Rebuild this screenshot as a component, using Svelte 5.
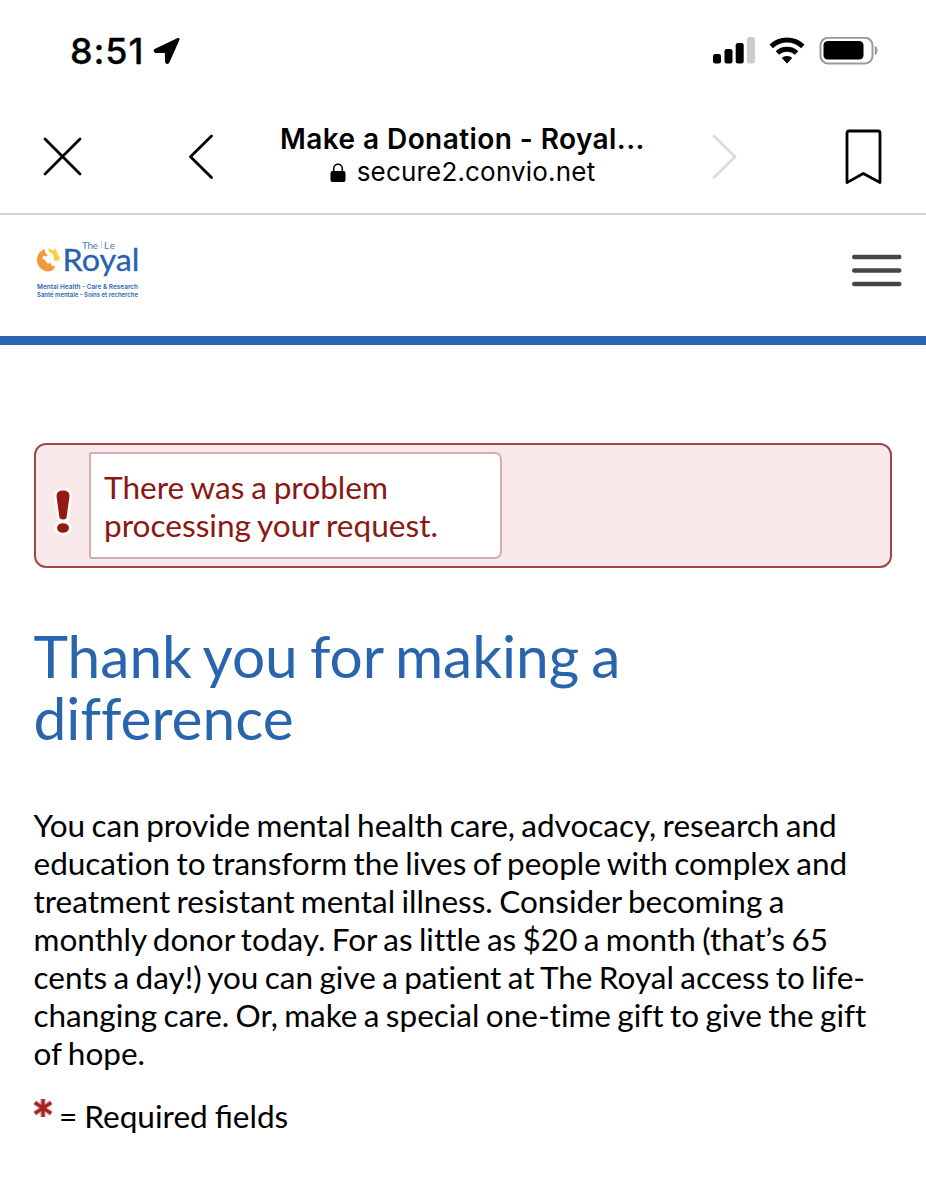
<script lang="ts">
  const title = 'Make a Donation - Royal...';
  const host = 'secure2.convio.net';

  const intro = [
    'You can provide mental health care, advocacy, research and',
    'education to transform the lives of people with complex and',
    'treatment resistant mental illness. Consider becoming a',
    'monthly donor today. For as little as $20 a month (that’s 65',
    'cents a day!) you can give a patient at The Royal access to life-',
    'changing care. Or, make a special one-time gift to give the gift',
    'of hope.'
  ];
</script>

<div class="screen">
  <div class="status-bar">
    <div class="time">
      <span>8:51</span>
      <svg width="30" height="30" viewBox="0 0 30 30">
        <path d="M26.3 3.2 L3.2 14.2 Q2.6 15.4 4 15.6 L14 15.8 L14.4 26 Q15.2 27.4 16.2 26 Z" fill="#000" stroke="#000" stroke-width="2.6" stroke-linejoin="round" />
      </svg>
    </div>
    <div class="indicators">
      <svg width="42" height="28" viewBox="0 0 42 28">
        <rect x="0" y="17" width="8" height="9.5" rx="2.3" />
        <rect x="11.5" y="12" width="8" height="14.5" rx="2.3" />
        <rect x="22.7" y="6" width="8" height="20.5" rx="2.3" />
        <rect x="34" y="0" width="8" height="26.5" rx="2.3" fill="#ccc" />
      </svg>
      <svg class="wifi" width="36" height="28" viewBox="0 0 36 28">
        <path d="M2.2 9.4 A23 23 0 0 1 33.8 9.4" />
        <path d="M8.4 16 A14 14 0 0 1 27.6 16" />
        <path d="M18 19 C15.8 19 14 19.8 12.8 21.1 L18 26.5 L23.2 21.1 C22 19.8 20.2 19 18 19 Z" class="dot" />
      </svg>
      <svg width="60" height="28" viewBox="0 0 60 28">
        <rect x="1.5" y="0.8" width="52" height="25.6" rx="7.5" fill="none" stroke="#999" stroke-width="2" />
        <rect x="4.5" y="4" width="40" height="18.6" rx="4.3" />
        <path d="M55.8 8.8 C59.5 10.6 59.5 16.6 55.8 18.4 Z" fill="#999" />
      </svg>
    </div>
  </div>

  <div class="browser-bar">
    <svg class="close" width="42" height="42" viewBox="0 0 42 42">
      <path d="M4 3 L39 38 M39 3 L4 38" />
    </svg>
    <svg class="back" width="26" height="48" viewBox="0 0 26 48">
      <path d="M23.5 3 L2.5 23.7 L23.5 44.4" />
    </svg>
    <div class="page-info">
      <div class="page-title">{title}</div>
      <div class="host">
        <svg width="16" height="19" viewBox="0 0 16 19">
          <rect x="0.5" y="8" width="15" height="11" rx="2" />
          <path d="M3.7 9 V5.5 A4.3 4.3 0 0 1 12.3 5.5 V9" fill="none" stroke="#000" stroke-width="1.6" />
        </svg>
        <span>{host}</span>
      </div>
    </div>
    <svg class="forward" width="26" height="48" viewBox="0 0 26 48">
      <path d="M3 3 L24 23.7 L3 44.4" />
    </svg>
    <svg class="bookmark" width="38" height="56" viewBox="0 0 38 56">
      <path d="M4 2 H33 Q35 2 35 4 V53.6 L18.3 44.5 L2 53.6 V4 Q2 2 4 2 Z" />
    </svg>
  </div>

  <header>
    <svg class="logo" width="106" height="66" viewBox="0 0 106 66">
      <path d="M9 10 C3 12 0.5 17 1 22.5 C2 29 8 33 13 32.3 C16.5 32 19 29.5 19 27 C16.5 28 15 26 14.5 23.5 C13 25.5 10 24.5 9.5 21.5 C6.5 20.5 5.5 17.5 7.5 17 C9.5 17 11.5 18 11.5 16 C9.5 15 8.5 12.5 9 10 Z" fill="#f19a3a" />
      <path d="M13 9 C15 11.5 18 12 20 9.5 C20.5 13 22.5 16 24.3 19.5 C23 22 20.5 22.4 18 21.5 C18.5 18 17 14.5 14 13.5 C12 12.5 12 10.5 13 9 Z" fill="#fbcf4b" />
      <text x="46" y="9.6" font-size="10" textLength="16" fill="#4d80ba">The</text>
      <path d="M65.5 2.5 V9.5" stroke="#d9bd9a" stroke-width="1" stroke-dasharray="1.5 1" />
      <text x="68" y="9.6" font-size="10" textLength="11" fill="#4d80ba">Le</text>
      <text x="26.5" y="31.6" font-size="31" textLength="77" lengthAdjust="spacingAndGlyphs" fill="#2762ae" stroke="#2762ae" stroke-width="0.3">Royal</text>
      <text class="tagline" x="1" y="49.8" textLength="101" lengthAdjust="spacingAndGlyphs">Mental Health - Care &amp; Research</text>
      <text class="tagline" x="1" y="57.5" textLength="101" lengthAdjust="spacingAndGlyphs">Santé mentale - Soins et recherche</text>
    </svg>
    <svg class="menu" width="50" height="34" viewBox="0 0 50 34">
      <rect y="0.7" width="49.5" height="4.6" rx="2.2" />
      <rect y="14.2" width="49.5" height="4.6" rx="2.2" />
      <rect y="27.7" width="49.5" height="4.6" rx="2.2" />
    </svg>
  </header>

  <main>
    <div class="error">
      <svg width="26" height="52" viewBox="0 0 26 52">
        <g fill="#fff" stroke="#fff" stroke-width="6" stroke-linejoin="round">
          <path d="M7 9 Q7 5 13 5 Q19 5 19 9 L16 32 Q13 35 10 32 Z" />
          <ellipse cx="13" cy="42" rx="6" ry="4.5" />
        </g>
        <g fill="#971914">
          <path d="M6.5 10 Q6.5 4.5 13 4.5 Q19.5 4.5 19.5 10 L16.5 32 Q13 35 9.5 32 Z" />
          <ellipse cx="13" cy="42" rx="6" ry="4.8" />
        </g>
      </svg>
      <p>There was a problem<br />processing your request.</p>
    </div>

    <h1>Thank you for making a<br />difference</h1>

    <p class="intro">
      {#each intro as line}
        <span>{line}</span>
      {/each}
    </p>

    <p class="required">
      <svg width="20" height="22" viewBox="0 0 22 22">
        <path d="M11 1 V21 M2 5 L20 17 M20 5 L2 17" stroke="#d9b4b2" stroke-width="6" />
        <path d="M11 1 V21 M2 5 L20 17 M20 5 L2 17" stroke="#a52420" stroke-width="3.6" />
      </svg>
      <span>= Required fields</span>
    </p>
  </main>
</div>

<style>
  :global(body) {
    margin: 0;
    background: #fff;
  }

  .screen {
    width: 926px;
    height: 1200px;
    overflow: hidden;
    background: #fff;
    color: #000;
    font-family: Lato, sans-serif;
  }

  svg {
    display: block;
    flex: none;
  }

  .status-bar {
    display: flex;
    justify-content: space-between;
    height: 100px;
    padding: 0 47px 0 70px;
    box-sizing: border-box;
  }

  .time {
    display: flex;
    gap: 8px;
    padding-top: 31px;
    font: 500 36px/40px Inter, sans-serif;
    letter-spacing: 0.9px;
    -webkit-text-stroke: 0.3px #000;
  }

  .time svg {
    margin-top: 5px;
  }

  .indicators {
    display: flex;
    padding-top: 37px;
  }

  .wifi {
    margin: 0 14px 0 14px;
    fill: none;
    stroke: #000;
    stroke-width: 5;
  }

  .wifi .dot {
    fill: #000;
    stroke: none;
  }

  .browser-bar {
    display: flex;
    height: 113px;
    padding: 0 43px 0 41px;
    border-bottom: 2px solid #d2d2d2;
  }

  .browser-bar > svg {
    fill: none;
    stroke: #000;
    stroke-width: 2.8;
    stroke-linecap: round;
    stroke-linejoin: round;
  }

  .close {
    margin-top: 36px;
  }

  .back {
    margin: 33px 0 0 105px;
  }

  .browser-bar > .forward {
    margin-top: 33px;
    stroke: #dcdcdc;
  }

  .bookmark {
    margin: 29px 0 0 auto;
  }

  .page-info {
    width: 497px;
    padding-top: 21px;
    font-family: Inter, sans-serif;
    text-align: center;
    white-space: nowrap;
  }

  .page-title {
    font-size: 28px;
    font-weight: 600;
    line-height: 36px;
    letter-spacing: 0.42px;
  }

  .host {
    display: flex;
    justify-content: center;
    align-items: center;
    gap: 11px;
    font-size: 26px;
    line-height: 30px;
    letter-spacing: 0.18px;
  }

  header {
    display: flex;
    justify-content: space-between;
    height: 120.5px;
    padding: 24px 24px 0 36px;
    box-sizing: border-box;
  }

  .tagline {
    font-family: Inter, sans-serif;
    font-size: 6.3px;
    font-weight: 600;
    fill: #2f68b0;
  }

  .menu {
    margin-top: 15px;
    fill: #454647;
  }

  main {
    padding: 98.5px 34px 0;
    border-top: 9px solid #2a66b1;
  }

  p,
  h1 {
    margin: 0;
    font-weight: 400;
    white-space: nowrap;
    font-variant-ligatures: no-common-ligatures;
  }

  .error {
    display: flex;
    height: 125px;
    padding: 7px 14px;
    box-sizing: border-box;
    border: 2px solid #9f4747;
    border-radius: 12px;
    background: #f9e9ea;
  }

  .error svg {
    margin-top: 34px;
  }

  .error p {
    width: 413px;
    height: 107px;
    margin-left: 13px;
    padding: 14px 13px;
    box-sizing: border-box;
    border: 2px solid #d5adb0;
    border-radius: 2px 7px 7px 2px;
    background: #fff;
    color: #8a1813;
    font-size: 31.6px;
    line-height: 38px;
    word-spacing: -1.3px;
  }

  h1 {
    margin: 56px 0 0 -0.5px;
    color: #2965ad;
    font-size: 58.6px;
    line-height: 62px;
    word-spacing: -2.9px;
  }

  .intro {
    margin: 58px 0 0 -0.5px;
    font-size: 31.5px;
    line-height: 38px;
    word-spacing: -1.7px;
  }

  .intro span {
    display: block;
  }

  .required {
    display: flex;
    gap: 6px;
    margin: 25px 0 0 -1px;
    font-size: 31.6px;
    line-height: 38px;
    word-spacing: -1.2px;
    font-variant-ligatures: normal;
  }
</style>
